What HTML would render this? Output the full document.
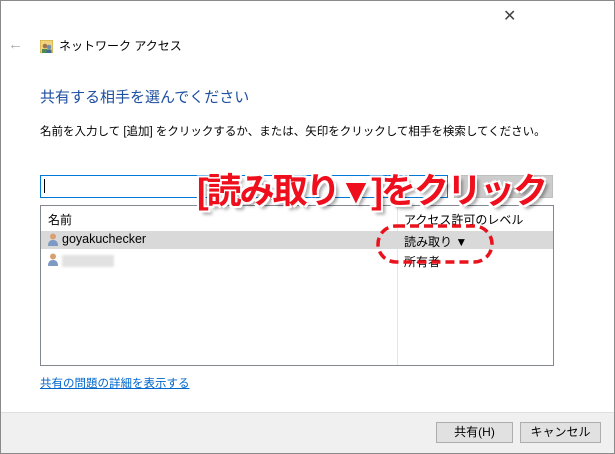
<!DOCTYPE html>
<html><head><meta charset="utf-8"><style>
*{margin:0;padding:0;box-sizing:border-box}
body{width:615px;height:454px;position:relative;overflow:hidden;background:#fff;font-family:"Liberation Sans","Noto Sans CJK JP",sans-serif;color:#000}
.win{position:absolute;left:0;top:0;width:615px;height:454px;border:1px solid #8a8a8a}
.abs{position:absolute;white-space:nowrap}
.f12{font-size:12px}
</style></head><body>
<div class="win"></div>
<div class="abs" style="left:503px;top:6px;font-size:16px;color:#444;font-weight:300">✕</div>
<div class="abs" style="left:8px;top:36px;font-size:15px;color:#aaa">←</div>
<svg class="abs" style="left:40px;top:40px" width="13" height="13"><rect x="0" y="0" width="13" height="13" fill="#f1d47a" stroke="#c9a33c"/><circle cx="5" cy="6" r="2.3" fill="#a0734e"/><circle cx="9" cy="7" r="2.3" fill="#6f8fb0"/><rect x="2" y="9" width="5" height="4" fill="#4f8a4f"/><rect x="6.5" y="9.5" width="5" height="3.5" fill="#3d6c9c"/></svg>
<div class="abs f12" style="left:59px;top:37px">ネットワーク アクセス</div>
<div class="abs" style="left:40px;top:86px;font-size:15px;color:#1e4fa0">共有する相手を選んでください</div>
<div class="abs" style="left:40px;top:123px;font-size:11.5px">名前を入力して [追加] をクリックするか、または、矢印をクリックして相手を検索してください。</div>
<div class="abs" style="left:40px;top:175px;width:408px;height:23px;border:1px solid #0078d7"></div>
<div class="abs" style="left:44px;top:179px;width:1px;height:14px;background:#000"></div>
<div class="abs" style="left:454px;top:175px;width:99px;height:23px;background:#ccc;border:1px solid #bfbfbf"></div>
<div class="abs" style="left:40px;top:205px;width:514px;height:161px;border:1px solid #828790"></div>
<div class="abs" style="left:397px;top:206px;width:1px;height:159px;background:#e5e5e5"></div>
<div class="abs f12" style="left:48px;top:211px">名前</div>
<div class="abs f12" style="left:404px;top:211px">アクセス許可のレベル</div>
<div class="abs" style="left:41px;top:231px;width:512px;height:18px;background:#d9d9d9"></div>
<svg class="abs" style="left:48px;top:233px" width="10" height="13"><circle cx="5" cy="3.5" r="3" fill="#d8a070"/><path d="M0 13 Q0 7 5 7 Q10 7 10 13Z" fill="#7c9ac4"/></svg>
<div class="abs" style="left:62px;top:232px;font-size:12.5px">goyakuchecker</div>
<div class="abs f12" style="left:404px;top:233px">読み取り ▼</div>
<svg class="abs" style="left:48px;top:253px" width="10" height="13"><circle cx="5" cy="3.5" r="3" fill="#d8a070"/><path d="M0 13 Q0 7 5 7 Q10 7 10 13Z" fill="#7c9ac4"/></svg>
<div class="abs" style="left:62px;top:255px;width:52px;height:12px;background:#e2e2e2;filter:blur(1px)"></div>
<div class="abs f12" style="left:404px;top:253px">所有者</div>
<svg class="abs" style="left:370px;top:220px" width="130" height="48"><rect x="8" y="6" width="114" height="36" rx="18" fill="none" stroke="#e8131c" stroke-width="3.5" stroke-dasharray="9 5"/></svg>
<div class="abs" style="left:197px;top:163px;font-size:35px;font-weight:bold;color:#ee0e1c;letter-spacing:-2px;text-shadow:-2px -2px 0 #fff,2px -2px 0 #fff,-2px 2px 0 #fff,2px 2px 0 #fff,4px 4px 3px rgba(0,0,0,.35)">[読み取り▼]をクリック</div>
<div class="abs" style="left:40px;top:375px;font-size:11.5px;color:#0066cc;text-decoration:underline">共有の問題の詳細を表示する</div>
<div class="abs" style="left:1px;top:412px;width:613px;height:41px;background:#f0f0f0;border-top:1px solid #dfdfdf"></div>
<div class="abs f12" style="left:436px;top:422px;width:77px;height:21px;background:#e1e1e1;border:1px solid #adadad;text-align:center;line-height:19px">共有(H)</div>
<div class="abs f12" style="left:520px;top:422px;width:81px;height:21px;background:#e1e1e1;border:1px solid #adadad;text-align:center;line-height:19px">キャンセル</div>
</body></html>
